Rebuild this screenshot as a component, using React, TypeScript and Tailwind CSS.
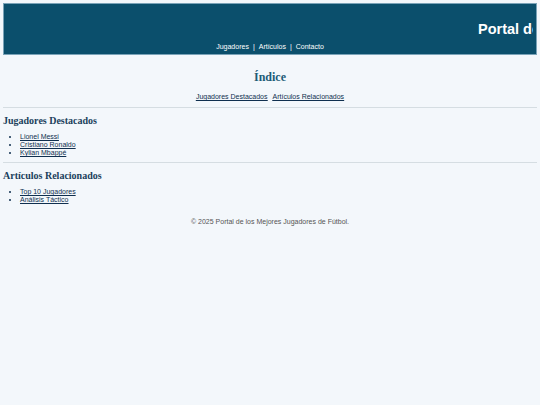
export default function App() {
  const jugadores = ['Lionel Messi', 'Cristiano Ronaldo', 'Kylian Mbappé'];
  const articulos = ['Top 10 Jugadores', 'Análisis Táctico'];

  return (
    <div className="min-h-[405px] bg-[#f3f7fb] px-[3px] pt-[3px] font-['Liberation_Sans',Arial,sans-serif]">
      <header className="h-[52px] border border-[#7aa3b8] bg-[#0b4f6c] flex flex-col">
        <div className="h-[39px] overflow-hidden mr-[3px] pl-[474px] pt-[13px] whitespace-nowrap">
          <span className="text-[14.5px] font-bold text-white leading-none">
            Portal de los Mejores Jugadores de Fútbol
          </span>
        </div>
        <nav className="flex justify-center gap-[4px] text-[7px] text-white leading-none">
          <a href="#jugadores">Jugadores</a>
          <span>|</span>
          <a href="#articulos">Artículos</a>
          <span>|</span>
          <a href="#contacto">Contacto</a>
        </nav>
      </header>

      <main>
        <h1 className="mt-[13px] text-center font-['Liberation_Serif',Georgia,serif] text-[12px] font-bold text-[#1d5c78]">
          Índice
        </h1>
        <div className="mt-[7px] flex justify-center gap-[5px] text-[7px] leading-none text-[#0f2f4f] underline">
          <a href="#jugadores">Jugadores Destacados</a>
          <a href="#articulos">Artículos Relacionados</a>
        </div>
        <hr className="mt-[7px] border-t border-[#d5dde2]" />

        <section id="jugadores">
          <h2 className="mt-[5px] font-['Liberation_Serif',Georgia,serif] text-[10px] font-bold text-[#1b3f5c]">
            Jugadores Destacados
          </h2>
          <ul className="mt-[5px] list-disc pl-[17px] text-[7px] leading-[8px] text-[#0f2f4f]">
            {jugadores.map(j => (
              <li key={j}><a href="#" className="underline">{j}</a></li>
            ))}
          </ul>
        </section>
        <hr className="mt-[5px] border-t border-[#d5dde2]" />

        <section id="articulos">
          <h2 className="mt-[5px] font-['Liberation_Serif',Georgia,serif] text-[10px] font-bold text-[#1b3f5c]">
            Artículos Relacionados
          </h2>
          <ul className="mt-[5px] list-disc pl-[17px] text-[7px] leading-[8px] text-[#0f2f4f]">
            {articulos.map(a => (
              <li key={a}><a href="#" className="underline">{a}</a></li>
            ))}
          </ul>
        </section>

        <footer id="contacto" className="mt-[13px] text-center text-[7px] text-[#555]">
          © 2025 Portal de los Mejores Jugadores de Fútbol.
        </footer>
      </main>
    </div>
  );
}
